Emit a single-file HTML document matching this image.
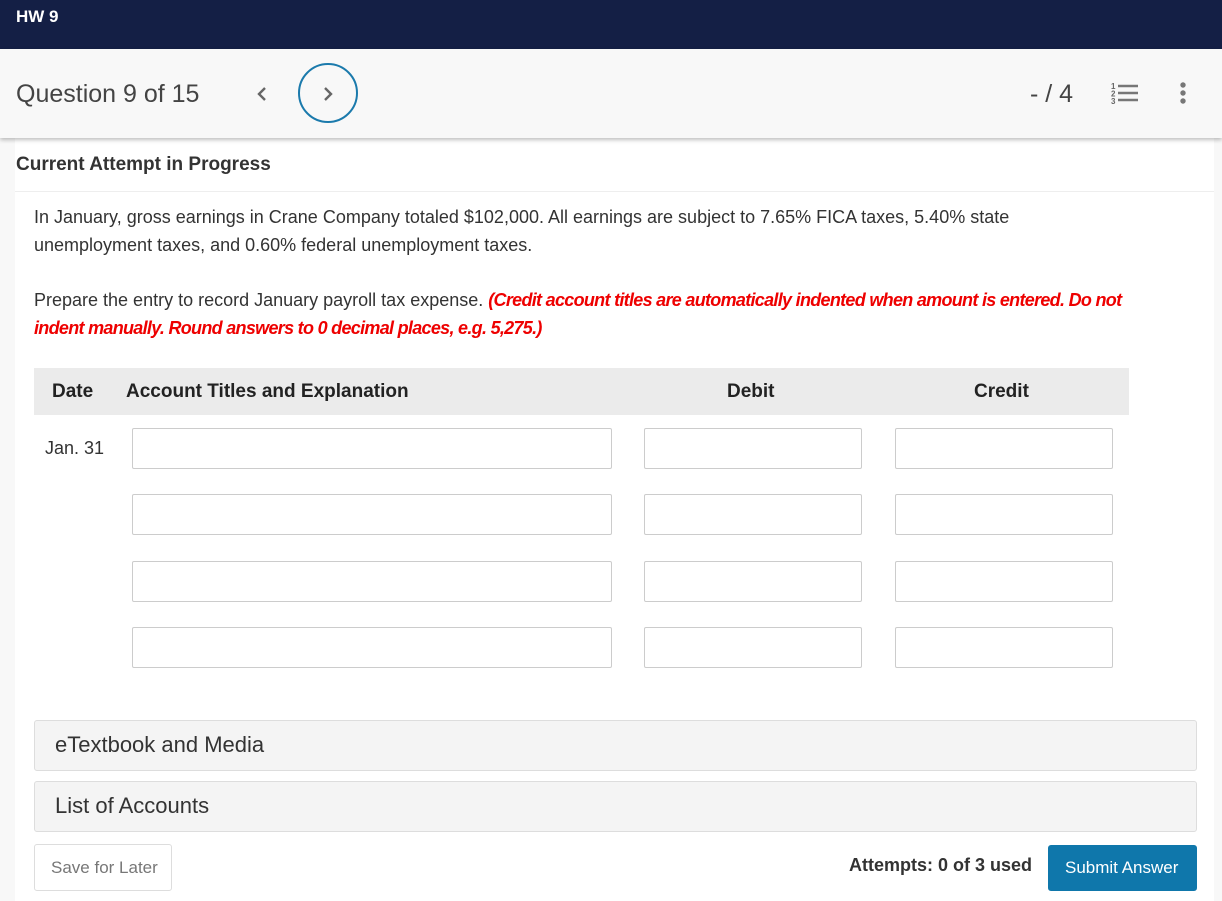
<!DOCTYPE html>
<html><head><style>
*{box-sizing:border-box;margin:0;padding:0}
body{width:1222px;height:901px;overflow:hidden;background:#f8f8f8;font-family:"Liberation Sans",sans-serif;color:#333;position:relative}
.top{position:absolute;left:0;top:0;width:1222px;height:49px;background:#141f45;color:#fff;font-weight:bold;font-size:17px;padding:7px 0 0 16px}
.bar{position:absolute;left:0;top:49px;width:1222px;height:89px;background:#f8f8f8;box-shadow:0 2px 4px rgba(0,0,0,.25);z-index:2}
.q{position:absolute;left:16px;font-size:25px;color:#444}
.main{position:absolute;left:15px;top:138px;width:1199px;height:763px;background:#fff}
.abs{position:absolute}
.inp{position:absolute;height:41px;border:1px solid #ccc;border-radius:2px;background:#fff}
.acc{position:absolute;left:34px;width:1163px;height:51px;background:#f4f4f4;border:1px solid #ddd;border-radius:3px;font-size:22px;padding:11px 0 0 20px;color:#333}
</style></head><body>
<div class="top">HW 9</div>
<div class="bar">
<div class="q" style="top:31px">Question 9 of 15</div>
<svg class="abs" style="left:256px;top:37px" width="12" height="16"><path d="M9 2L3 8L9 14" stroke="#666" stroke-width="2.4" fill="none"/></svg>
<div class="abs" style="left:298px;top:14px;width:60px;height:60px;border:2px solid #1b7aac;border-radius:50%"></div>
<svg class="abs" style="left:322px;top:37px" width="12" height="16"><path d="M3 2L9 8L3 14" stroke="#666" stroke-width="2.4" fill="none"/></svg>
<div class="abs" style="left:1030px;top:31px;font-size:25px;color:#444">- / 4</div>
<svg class="abs" style="left:1110px;top:32px" width="30" height="24"><text x="1" y="8" font-size="8" font-weight="bold" fill="#666" font-family="Liberation Sans">1</text><text x="1" y="15.5" font-size="8" font-weight="bold" fill="#666" font-family="Liberation Sans">2</text><text x="1" y="23" font-size="8" font-weight="bold" fill="#666" font-family="Liberation Sans">3</text><path d="M8 5H28M8 12H28M8 19H28" stroke="#777" stroke-width="2.5"/></svg>
<svg class="abs" style="left:1178px;top:32px" width="10" height="24"><circle cx="5" cy="4" r="2.7" fill="#777"/><circle cx="5" cy="12" r="2.7" fill="#777"/><circle cx="5" cy="20" r="2.7" fill="#777"/></svg>
</div>
<div class="main"></div>
<div class="abs" style="left:16px;top:154px;font-size:19px;font-weight:bold;color:#333">Current Attempt in Progress</div>
<div class="abs" style="left:15px;top:191px;width:1199px;height:1px;background:#eee"></div>
<div class="abs" style="left:34px;top:203px;width:1050px;font-size:18px;line-height:28px;color:#333">In January, gross earnings in Crane Company totaled $102,000. All earnings are subject to 7.65% FICA taxes, 5.40% state unemployment taxes, and 0.60% federal unemployment taxes.</div>
<div class="abs" style="left:34px;top:286px;width:1160px;font-size:18px;line-height:28px;color:#333">Prepare the entry to record January payroll tax expense. <i style="color:#e00;font-weight:bold;letter-spacing:-0.7px">(Credit account titles are automatically indented when amount is entered. Do not<br>indent manually. Round answers to 0 decimal places, e.g. 5,275.)</i></div>
<div class="abs" style="left:34px;top:368px;width:1095px;height:47px;background:#ebebeb"></div>
<div class="abs" style="left:52px;top:381px;font-size:19px;font-weight:bold;color:#222">Date</div>
<div class="abs" style="left:126px;top:381px;font-size:19px;font-weight:bold;color:#222">Account Titles and Explanation</div>
<div class="abs" style="left:727px;top:381px;font-size:19px;font-weight:bold;color:#222">Debit</div>
<div class="abs" style="left:974px;top:381px;font-size:19px;font-weight:bold;color:#222">Credit</div>
<div class="abs" style="left:45px;top:438px;font-size:18px;color:#333">Jan. 31</div>
<div class="inp" style="left:132px;top:428px;width:480px"></div><div class="inp" style="left:644px;top:428px;width:218px"></div><div class="inp" style="left:895px;top:428px;width:218px"></div>
<div class="inp" style="left:132px;top:494px;width:480px"></div><div class="inp" style="left:644px;top:494px;width:218px"></div><div class="inp" style="left:895px;top:494px;width:218px"></div>
<div class="inp" style="left:132px;top:561px;width:480px"></div><div class="inp" style="left:644px;top:561px;width:218px"></div><div class="inp" style="left:895px;top:561px;width:218px"></div>
<div class="inp" style="left:132px;top:627px;width:480px"></div><div class="inp" style="left:644px;top:627px;width:218px"></div><div class="inp" style="left:895px;top:627px;width:218px"></div>
<div class="acc" style="top:720px">eTextbook and Media</div>
<div class="acc" style="top:781px">List of Accounts</div>
<div class="abs" style="left:34px;top:844px;width:138px;height:47px;border:1px solid #ddd;border-radius:3px;font-size:17px;color:#777;padding:13px 0 0 16px">Save for Later</div>
<div class="abs" style="left:849px;top:855px;font-size:18px;font-weight:bold;color:#333">Attempts: 0 of 3 used</div>
<div class="abs" style="left:1048px;top:845px;width:149px;height:46px;background:#0f77ab;border-radius:3px;color:#fff;font-size:17px;padding:13px 0 0 17px">Submit Answer</div>
</body></html>
